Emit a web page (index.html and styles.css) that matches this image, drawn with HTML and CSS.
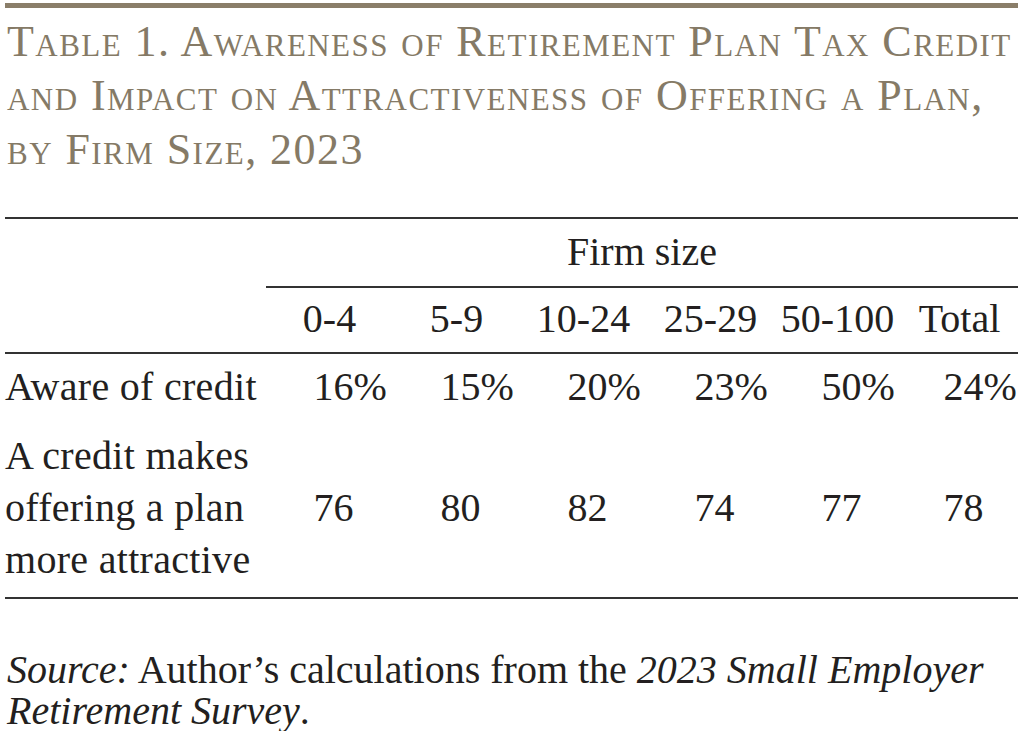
FILE: index.html
```html
<!DOCTYPE html>
<html lang="en">
<head>
<meta charset="utf-8">
<title>Table 1</title>
<link rel="stylesheet" href="styles.css">
</head>
<body>
<div class="page">
  <div class="top-rule"></div>
  <h1 class="title">Table 1. Awareness of Retirement Plan Tax Credit and Impact on Attractiveness of Offering a Plan, by Firm Size, 2023</h1>
  <div class="table">
    <div class="cell group-blank"></div>
    <div class="cell group">Firm size</div>

    <div class="cell head-blank"></div>
    <div class="cell head">0-4</div>
    <div class="cell head">5-9</div>
    <div class="cell head">10-24</div>
    <div class="cell head">25-29</div>
    <div class="cell head">50-100</div>
    <div class="cell head">Total</div>

    <div class="cell label r1">Aware of credit</div>
    <div class="cell val r1">16<span class="pct">%</span></div>
    <div class="cell val r1">15<span class="pct">%</span></div>
    <div class="cell val r1">20<span class="pct">%</span></div>
    <div class="cell val r1">23<span class="pct">%</span></div>
    <div class="cell val r1">50<span class="pct">%</span></div>
    <div class="cell val r1">24<span class="pct">%</span></div>

    <div class="cell label r2">A credit makes offering a plan more attractive</div>
    <div class="cell val r2">76</div>
    <div class="cell val r2">80</div>
    <div class="cell val r2">82</div>
    <div class="cell val r2">74</div>
    <div class="cell val r2">77</div>
    <div class="cell val r2">78</div>
  </div>
  <p class="source"><em>Source:</em> Author’s calculations from the <em>2023 Small Employer</em> <em>Retirement Survey</em>.</p>
</div>
</body>
</html>
```
FILE: styles.css
```css
html, body {
  margin: 0;
  padding: 0;
  background: #ffffff;
}

.page {
  width: 1013px;
  padding: 3px 0 0 5px;
  font-family: "Liberation Serif", "Times New Roman", serif;
  color: #231f20;
}

.top-rule {
  height: 5px;
  background: #8a7e69;
}

.title {
  margin: 7px 0 0;
  font-size: 44px;
  line-height: 54px;
  font-weight: normal;
  font-variant: small-caps;
  letter-spacing: 1.45px;
  color: #857a66;
  padding-left: 2px;
}

.table {
  margin-top: 40px;
  display: grid;
  grid-template-columns: 261px repeat(5, 127px) 1fr;
  border-top: 2px solid #333;
  border-bottom: 2px solid #333;
  font-size: 40px;
  line-height: 52px;
}

.cell {
  white-space: nowrap;
}

.group-blank {
  padding: 7px 0 8px;
}

.group {
  grid-column: 2 / 8;
  text-align: center;
  padding: 7px 0 8px;
  border-bottom: 2px solid #333;
}

.head-blank,
.head {
  padding: 5px 0 7px;
  border-bottom: 2px solid #333;
}

.head {
  text-align: center;
}

.label {
  white-space: normal;
  width: 260px;
  letter-spacing: 0.3px;
}

.val {
  padding-left: 8px;
  display: flex;
  align-items: center;
  justify-content: center;
}

.r1 {
  padding-top: 7px;
  padding-bottom: 8px;
}

.r2 {
  padding-top: 9px;
  padding-bottom: 11px;
}

.pct {
  display: inline-block;
  width: 0;
  overflow: visible;
}

.source {
  margin: 50px 0 0;
  padding-left: 2px;
  font-size: 40px;
  line-height: 41px;
  width: 1000px;
}
```
